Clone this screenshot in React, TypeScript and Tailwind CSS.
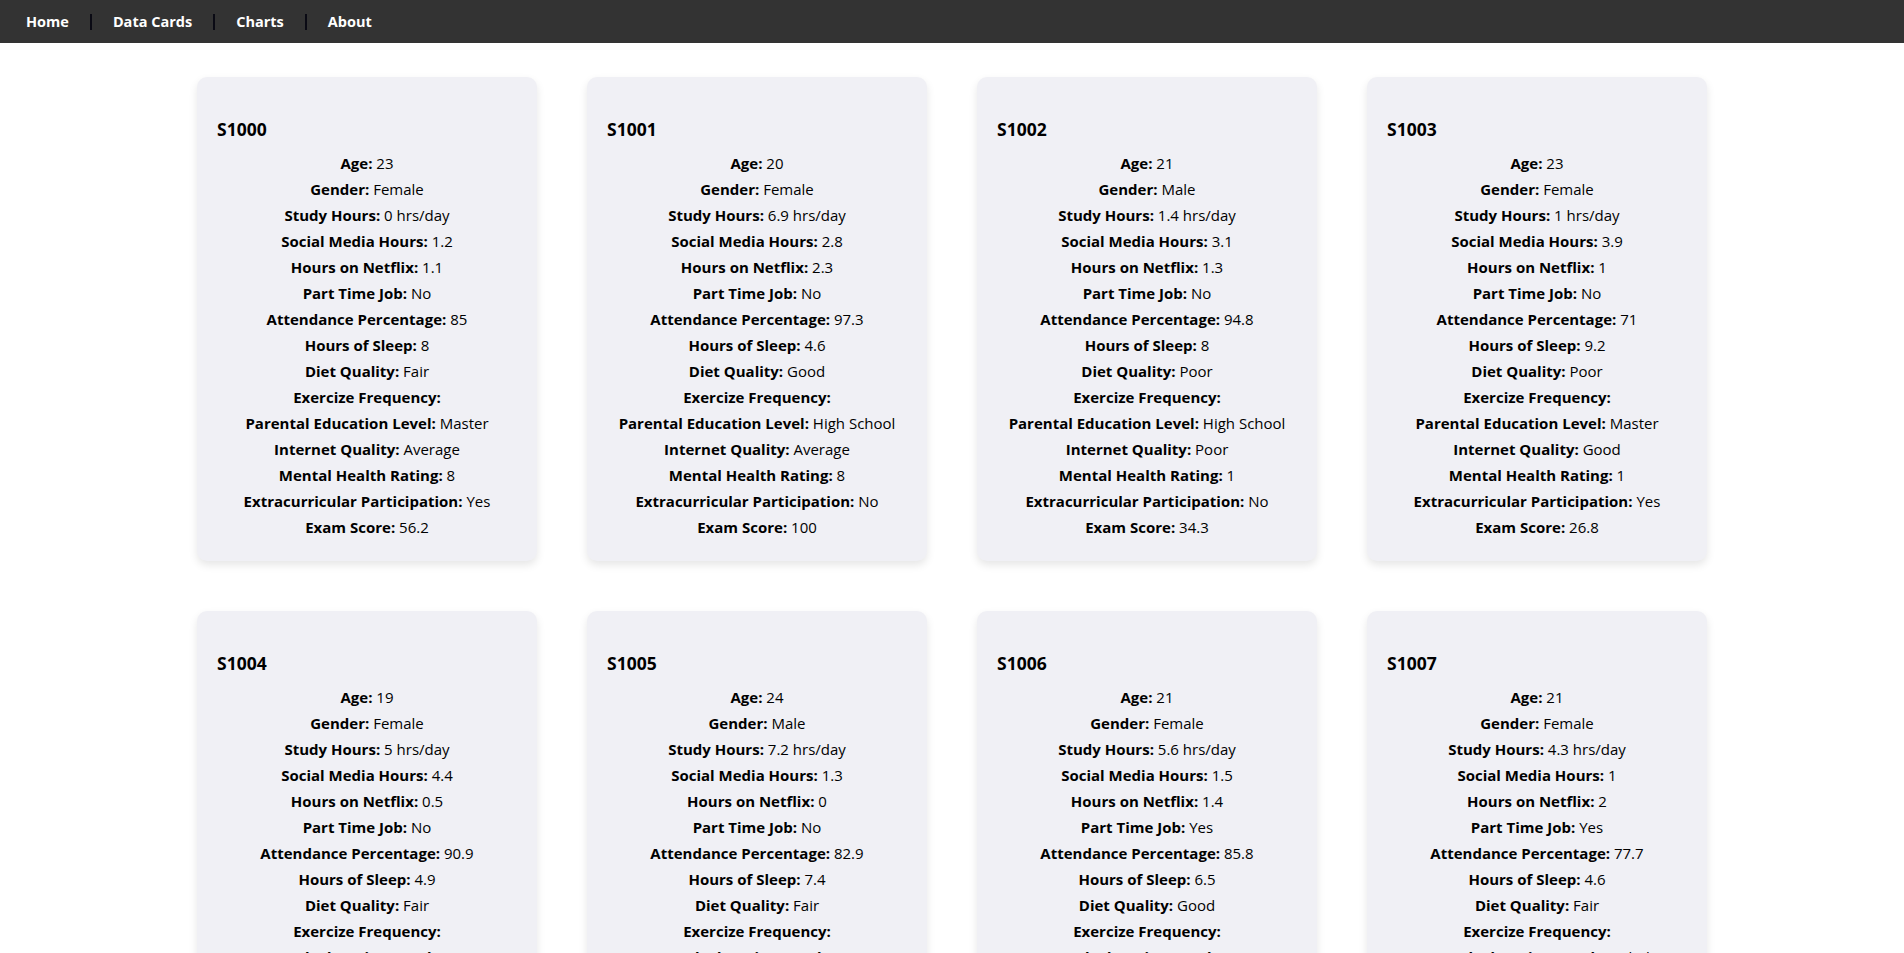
import React from "react";

type Student = {
  id: string;
  age: number;
  gender: string;
  study: number;
  social: number;
  netflix: number;
  job: string;
  attendance: number;
  sleep: number;
  diet: string;
  parent: string;
  internet: string;
  mental: number;
  extra: string;
  exam: number;
};

const students: Student[] = [
  { id: "S1000", age: 23, gender: "Female", study: 0, social: 1.2, netflix: 1.1, job: "No", attendance: 85, sleep: 8, diet: "Fair", parent: "Master", internet: "Average", mental: 8, extra: "Yes", exam: 56.2 },
  { id: "S1001", age: 20, gender: "Female", study: 6.9, social: 2.8, netflix: 2.3, job: "No", attendance: 97.3, sleep: 4.6, diet: "Good", parent: "High School", internet: "Average", mental: 8, extra: "No", exam: 100 },
  { id: "S1002", age: 21, gender: "Male", study: 1.4, social: 3.1, netflix: 1.3, job: "No", attendance: 94.8, sleep: 8, diet: "Poor", parent: "High School", internet: "Poor", mental: 1, extra: "No", exam: 34.3 },
  { id: "S1003", age: 23, gender: "Female", study: 1, social: 3.9, netflix: 1, job: "No", attendance: 71, sleep: 9.2, diet: "Poor", parent: "Master", internet: "Good", mental: 1, extra: "Yes", exam: 26.8 },
  { id: "S1004", age: 19, gender: "Female", study: 5, social: 4.4, netflix: 0.5, job: "No", attendance: 90.9, sleep: 4.9, diet: "Fair", parent: "Master", internet: "Good", mental: 1, extra: "No", exam: 66.4 },
  { id: "S1005", age: 24, gender: "Male", study: 7.2, social: 1.3, netflix: 0, job: "No", attendance: 82.9, sleep: 7.4, diet: "Fair", parent: "Master", internet: "Average", mental: 4, extra: "No", exam: 100 },
  { id: "S1006", age: 21, gender: "Female", study: 5.6, social: 1.5, netflix: 1.4, job: "Yes", attendance: 85.8, sleep: 6.5, diet: "Good", parent: "Master", internet: "Poor", mental: 4, extra: "Yes", exam: 89.8 },
  { id: "S1007", age: 21, gender: "Female", study: 4.3, social: 1, netflix: 2, job: "Yes", attendance: 77.7, sleep: 4.6, diet: "Fair", parent: "Bachelor", internet: "Average", mental: 8, extra: "Yes", exam: 72.7 },
];

function Row({ label, value }: { label: string; value: React.ReactNode }) {
  return (
    <p className="text-center leading-[21px]">
      <strong className="font-bold">{label}:</strong>
      {value !== "" ? <> {value}</> : null}
    </p>
  );
}

function Card({ s }: { s: Student }) {
  return (
    <div className="w-[340px] m-[25px] rounded-[10px] bg-[#f0f0f5] shadow-[0_4px_8px_rgba(0,0,0,0.1)] pt-[40px] pb-[23px] px-[20px]">
      <h3 className="text-[17.5px] font-bold leading-[25px] mb-[11px]">{s.id}</h3>
      <div className="flex flex-col gap-[5px]">
        <Row label="Age" value={s.age} />
        <Row label="Gender" value={s.gender} />
        <Row label="Study Hours" value={`${s.study} hrs/day`} />
        <Row label="Social Media Hours" value={s.social} />
        <Row label="Hours on Netflix" value={s.netflix} />
        <Row label="Part Time Job" value={s.job} />
        <Row label="Attendance Percentage" value={s.attendance} />
        <Row label="Hours of Sleep" value={s.sleep} />
        <Row label="Diet Quality" value={s.diet} />
        <Row label="Exercize Frequency" value="" />
        <Row label="Parental Education Level" value={s.parent} />
        <Row label="Internet Quality" value={s.internet} />
        <Row label="Mental Health Rating" value={s.mental} />
        <Row label="Extracurricular Participation" value={s.extra} />
        <Row label="Exam Score" value={s.exam} />
      </div>
    </div>
  );
}

export default function App() {
  const links = ["Home", "Data Cards", "Charts", "About"];
  return (
    <div className="min-h-screen bg-white text-black text-[15px]" style={{ fontFamily: '"Segoe UI", "Open Sans", "Noto Sans", sans-serif' }}>
      <nav className="h-[43px] bg-[#333333] flex items-center pl-[5px]">
        {links.map((l, i) => (
          <React.Fragment key={l}>
            <a className="px-[21px] text-white font-bold text-[14.5px] leading-[20px]" href="#">
              {l}
            </a>
            {i < links.length - 1 && <span className="w-[2px] h-[16px] bg-[#0a0a14]" />}
          </React.Fragment>
        ))}
      </nav>
      <div className="flex flex-wrap justify-center pt-[9px]">
        {students.map((s) => (
          <Card key={s.id} s={s} />
        ))}
      </div>
    </div>
  );
}
